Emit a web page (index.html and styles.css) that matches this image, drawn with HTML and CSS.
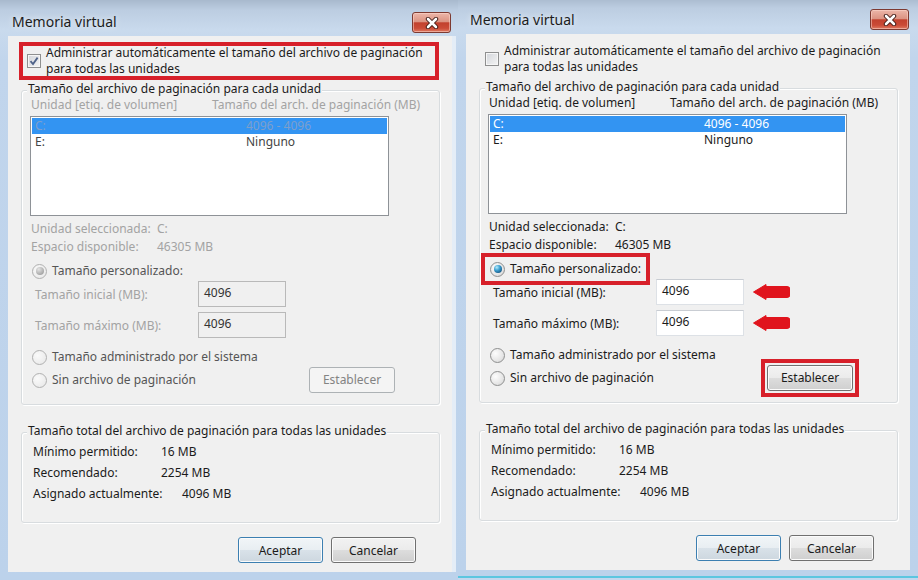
FILE: index.html
```html
<!doctype html>
<html lang="es">

<head>
	<title>Memoria virtual</title>
	<meta charset="utf-8">
	<link rel="stylesheet" href="styles.css">
</head>

<body>
	<div class="shots">
		<!-- antes: administrado automaticamente -->
		<section class="win win-left">
			<header class="titlebar">
				<span class="title">Memoria virtual</span>
				<button class="close" aria-label="Cerrar">
					<svg width="14" height="12" viewBox="0 0 14 12">
						<path d="M3 2 L11 10 M11 2 L3 10" stroke="#3a1510" stroke-width="4.4" stroke-linecap="round" fill="none" />
						<path d="M3 2 L11 10 M11 2 L3 10" stroke="#fff" stroke-width="2.6" stroke-linecap="round" fill="none" />
					</svg>
				</button>
			</header>
			<div class="client">
				<label class="auto mark">
					<span class="check">
						<svg width="12" height="12" viewBox="0 0 12 12">
							<path d="M2.5 6.2 L5 9 L9.6 2.6" stroke="#4f6389" stroke-width="1.8" fill="none" />
						</svg>
					</span>
					<span>Administrar automáticamente el tamaño del archivo de paginación<br>para todas las unidades</span>
				</label>
				<div class="group drives off">
					<div class="group-title">Tamaño del archivo de paginación para cada unidad</div>
					<div class="cols"><span>Unidad [etiq. de volumen]</span><span>Tamaño del arch. de paginación (MB)</span></div>
					<div class="list">
						<div class="item sel"><span>C:</span><span>4096 - 4096</span></div>
						<div class="item"><span>E:</span><span>Ninguno</span></div>
					</div>
					<div class="info first"><span>Unidad seleccionada:</span><span>C:</span></div>
					<div class="info"><span>Espacio disponible:</span><span>46305 MB</span></div>
					<div class="pick"><span class="radio on"></span>Tamaño personalizado:</div>
					<div class="size first"><span class="size-label">Tamaño inicial (MB):</span><span class="field">4096</span></div>
					<div class="size"><span class="size-label">Tamaño máximo (MB):</span><span class="field">4096</span></div>
					<div class="opt"><span class="radio"></span>Tamaño administrado por el sistema</div>
					<div class="opt last">
						<span class="radio"></span>Sin archivo de paginación
						<span class="ring"><button class="btn set">Establecer</button></span>
					</div>
				</div>
				<div class="group total">
					<div class="group-title">Tamaño total del archivo de paginación para todas las unidades</div>
					<div class="kv first"><span>Mínimo permitido:</span><span>16 MB</span></div>
					<div class="kv"><span>Recomendado:</span><span>2254 MB</span></div>
					<div class="kv wide"><span>Asignado actualmente:</span><span>4096 MB</span></div>
				</div>
				<div class="actions">
					<button class="btn default">Aceptar</button>
					<button class="btn">Cancelar</button>
				</div>
			</div>
		</section>

		<!-- despues: tamano personalizado -->
		<section class="win win-right">
			<header class="titlebar">
				<span class="title">Memoria virtual</span>
				<button class="close" aria-label="Cerrar">
					<svg width="14" height="12" viewBox="0 0 14 12">
						<path d="M3 2 L11 10 M11 2 L3 10" stroke="#3a1510" stroke-width="4.4" stroke-linecap="round" fill="none" />
						<path d="M3 2 L11 10 M11 2 L3 10" stroke="#fff" stroke-width="2.6" stroke-linecap="round" fill="none" />
					</svg>
				</button>
			</header>
			<div class="client">
				<label class="auto">
					<span class="check"></span>
					<span>Administrar automáticamente el tamaño del archivo de paginación<br>para todas las unidades</span>
				</label>
				<div class="group drives">
					<div class="group-title">Tamaño del archivo de paginación para cada unidad</div>
					<div class="cols"><span>Unidad [etiq. de volumen]</span><span>Tamaño del arch. de paginación (MB)</span></div>
					<div class="list">
						<div class="item sel"><span>C:</span><span>4096 - 4096</span></div>
						<div class="item"><span>E:</span><span>Ninguno</span></div>
					</div>
					<div class="info first"><span>Unidad seleccionada:</span><span>C:</span></div>
					<div class="info"><span>Espacio disponible:</span><span>46305 MB</span></div>
					<div class="pick mark"><span class="radio on"></span>Tamaño personalizado:</div>
					<div class="size first">
						<span class="size-label">Tamaño inicial (MB):</span><span class="field">4096</span>
						<svg class="arrow" width="37" height="16" viewBox="0 0 37 16">
							<path d="M0.5 8 L13 0.5 L13 2.5 L34 2.5 Q37 2.5 37 5.5 L37 10.5 Q37 13.5 34 13.5 L13 13.5 L13 15.5 Z" fill="#e0141d" stroke="#e0141d" stroke-linejoin="round" />
						</svg>
					</div>
					<div class="size">
						<span class="size-label">Tamaño máximo (MB):</span><span class="field">4096</span>
						<svg class="arrow" width="37" height="16" viewBox="0 0 37 16">
							<path d="M0.5 8 L13 0.5 L13 2.5 L34 2.5 Q37 2.5 37 5.5 L37 10.5 Q37 13.5 34 13.5 L13 13.5 L13 15.5 Z" fill="#e0141d" stroke="#e0141d" stroke-linejoin="round" />
						</svg>
					</div>
					<div class="opt"><span class="radio"></span>Tamaño administrado por el sistema</div>
					<div class="opt last">
						<span class="radio"></span>Sin archivo de paginación
						<span class="ring mark"><button class="btn set">Establecer</button></span>
					</div>
				</div>
				<div class="group total">
					<div class="group-title">Tamaño total del archivo de paginación para todas las unidades</div>
					<div class="kv first"><span>Mínimo permitido:</span><span>16 MB</span></div>
					<div class="kv"><span>Recomendado:</span><span>2254 MB</span></div>
					<div class="kv wide"><span>Asignado actualmente:</span><span>4096 MB</span></div>
				</div>
				<div class="actions">
					<button class="btn default">Aceptar</button>
					<button class="btn">Cancelar</button>
				</div>
			</div>
		</section>
	</div>
</body>

</html>
```

FILE: styles.css
```css
html
{
	margin: 0;
	padding: 0;
}
body
{
	margin: 0;
	padding: 0;
	overflow: hidden;
	background: #c3d7ee;
	font-family: "Noto Sans", "Open Sans", sans-serif;
	font-size: 12px;
	color: #1b1b1b;
}

.shots
{
	display: flex;
	align-items: flex-start;
}

/* aero window frame */
.win
{
	padding: 0 8px 8px 8px;
	background: linear-gradient(#a8b9cd 0, #bccde1 10px, #c9daed 30px, #c1d5ec 60px, #bcd2eb 100%);
}
.win-left
{
	padding-right: 6px;
}
.win-left .client
{
	box-shadow: 4px 0 0 #e4edf7;
}
.win-right
{
	margin-top: -2px;
	padding-bottom: 6px;
	border-bottom: 2px solid #5cc6e0;
}

.titlebar
{
	display: flex;
	align-items: flex-start;
	justify-content: space-between;
	height: 36px;
}
.title
{
	margin: 12px 0 0 4px;
	font-size: 14px;
	line-height: 20px;
	color: #1c1c1c;
	text-shadow: 0 0 6px rgba(255, 255, 255, 0.9);
}
.close
{
	display: flex;
	align-items: center;
	justify-content: center;
	width: 39px;
	height: 21px;
	margin: 12px 1px 0 0;
	padding: 0;
	border: 1px solid #7d3a31;
	border-radius: 3px;
	background: linear-gradient(#ecb6a9 0, #dc9483 45%, #c2412e 52%, #cb4b37 80%, #df7b63 100%);
	box-shadow: inset 0 0 0 1px rgba(255, 220, 210, 0.5);
}
.win-right .close
{
	margin-top: 11px;
}

.client
{
	box-sizing: border-box;
	width: 444px;
	height: 536px;
	padding-top: 10px;
	background: #f0f0f0;
}

/* red highlight marks */
.mark
{
	outline: 4px solid #d7202a;
}

.auto
{
	display: flex;
	align-items: center;
	gap: 5px;
	box-sizing: border-box;
	width: 412px;
	height: 30px;
	margin-left: 15px;
	padding-left: 4px;
	line-height: 16px;
}
.check
{
	display: flex;
	align-items: center;
	justify-content: center;
	flex: none;
	box-sizing: border-box;
	width: 14px;
	height: 14px;
	border: 1px solid #8e8f8f;
	background: linear-gradient(135deg, #d2d5da 0, #f4f4f4 100%);
	box-shadow: inset 0 0 0 1px #f6f6f6;
}

.group
{
	box-sizing: border-box;
	width: 419px;
	margin: 14px 0 0 13px;
	padding-bottom: 11px;
	border: 1px solid #d8dcdf;
	border-radius: 3px;
	box-shadow: inset 1px 1px 0 #fff, 1px 1px 0 #fff;
}
.group-title
{
	width: fit-content;
	margin: -9px 0 0 5px;
	padding: 0 1px;
	line-height: 14px;
	background: #f0f0f0;
}

.cols
{
	display: grid;
	grid-template-columns: 181px auto;
	margin-top: 1px;
	padding-left: 9px;
	line-height: 15px;
}

.list
{
	box-sizing: border-box;
	width: 359px;
	height: 100px;
	margin: 4px 0 0 8px;
	padding: 1px;
	border: 1px solid #8e9297;
	background: #fff;
}
.item
{
	display: grid;
	grid-template-columns: 211px auto;
	height: 16px;
	padding-left: 3px;
	line-height: 16px;
}
.item.sel
{
	background: #3394f2;
	color: #fff;
}

.info
{
	display: grid;
	grid-template-columns: 126px auto;
	padding-left: 9px;
	line-height: 18px;
}
.info.first
{
	margin-top: 4px;
}

.radio
{
	display: flex;
	align-items: center;
	justify-content: center;
	flex: none;
	box-sizing: border-box;
	width: 15px;
	height: 15px;
	border: 1px solid #8e8f8f;
	border-radius: 50%;
	background: radial-gradient(circle at 35% 35%, #fdfdfd 0, #e6e6e6 60%, #d0d0d0 100%);
}
.radio.on::after
{
	content: "";
	width: 8px;
	height: 8px;
	border-radius: 50%;
	background: radial-gradient(circle at 35% 30%, #b4ecfc 0, #3c9fd0 40%, #114f7c 85%);
}

.pick
{
	display: flex;
	align-items: center;
	gap: 5px;
	box-sizing: border-box;
	width: fit-content;
	height: 24px;
	margin: 3px 0 0 5px;
	padding: 0 5px 0 5px;
	line-height: 18px;
}

.size
{
	display: grid;
	grid-template-columns: 163px 88px auto;
	align-items: center;
	height: 26px;
	margin-top: 5px;
	padding-left: 13px;
}
.size.first
{
	margin-top: -2px;
}
.field
{
	box-sizing: border-box;
	height: 26px;
	padding: 3px 5px;
	border: 1px solid #dde1e6;
	border-top-color: #c9cdd3;
	background: #fff;
	line-height: 16px;
}
.arrow
{
	margin-left: 9px;
}

.opt
{
	display: flex;
	align-items: center;
	gap: 5px;
	margin-top: 10px;
	padding-left: 10px;
	line-height: 18px;
}
.opt.last
{
	height: 26px;
	margin-top: 1px;
}

.ring
{
	display: block;
	margin: 0 42px 0 auto;
	padding: 2px;
}
.ring .btn
{
	display: block;
	width: 86px;
}

.kv
{
	display: grid;
	grid-template-columns: 128px auto;
	padding-left: 11px;
	line-height: 21px;
}
.kv.first
{
	margin-top: 3px;
}
.kv.wide
{
	grid-template-columns: 149px auto;
}
.total
{
	margin-top: 27px;
	padding-bottom: 18px;
}

.actions
{
	display: flex;
	justify-content: flex-end;
	gap: 8px;
	margin-top: 14px;
	padding-right: 36px;
}

.btn
{
	width: 85px;
	height: 26px;
	padding: 0;
	border: 1px solid #707070;
	border-radius: 3px;
	background: linear-gradient(#f2f2f2 0, #ebebeb 50%, #dddddd 50%, #cfcfcf 100%);
	box-shadow: inset 0 0 0 1px #fbfbfb;
	font: inherit;
	color: #1b1b1b;
}
.btn.default
{
	border-color: #3c7fb1;
	background: linear-gradient(#f1f5f8 0, #e8eef2 50%, #d9e2e9 50%, #cdd7df 100%);
}

/* disabled state (left screenshot) */
.off .cols,
.off .info,
.off .size-label
{
	color: #a3a3a3;
}
.off .pick,
.off .opt
{
	color: #555;
}
.off .item
{
	color: #444;
}
.off .item.sel
{
	color: #7c9fcc;
}
.off .field
{
	border-color: #b9b9b9;
	background: #f0f0f0;
	color: #333;
}
.off .radio
{
	border-color: #b0b0b0;
	background: radial-gradient(circle at 35% 35%, #fafafa 0, #ececec 70%);
}
.off .radio.on::after
{
	background: radial-gradient(circle at 35% 30%, #e4e4e4 0, #a8a8a8 70%);
}
.off .btn
{
	border-color: #adb2b5;
	background: #f4f4f4;
	box-shadow: none;
	color: #838383;
}
```
